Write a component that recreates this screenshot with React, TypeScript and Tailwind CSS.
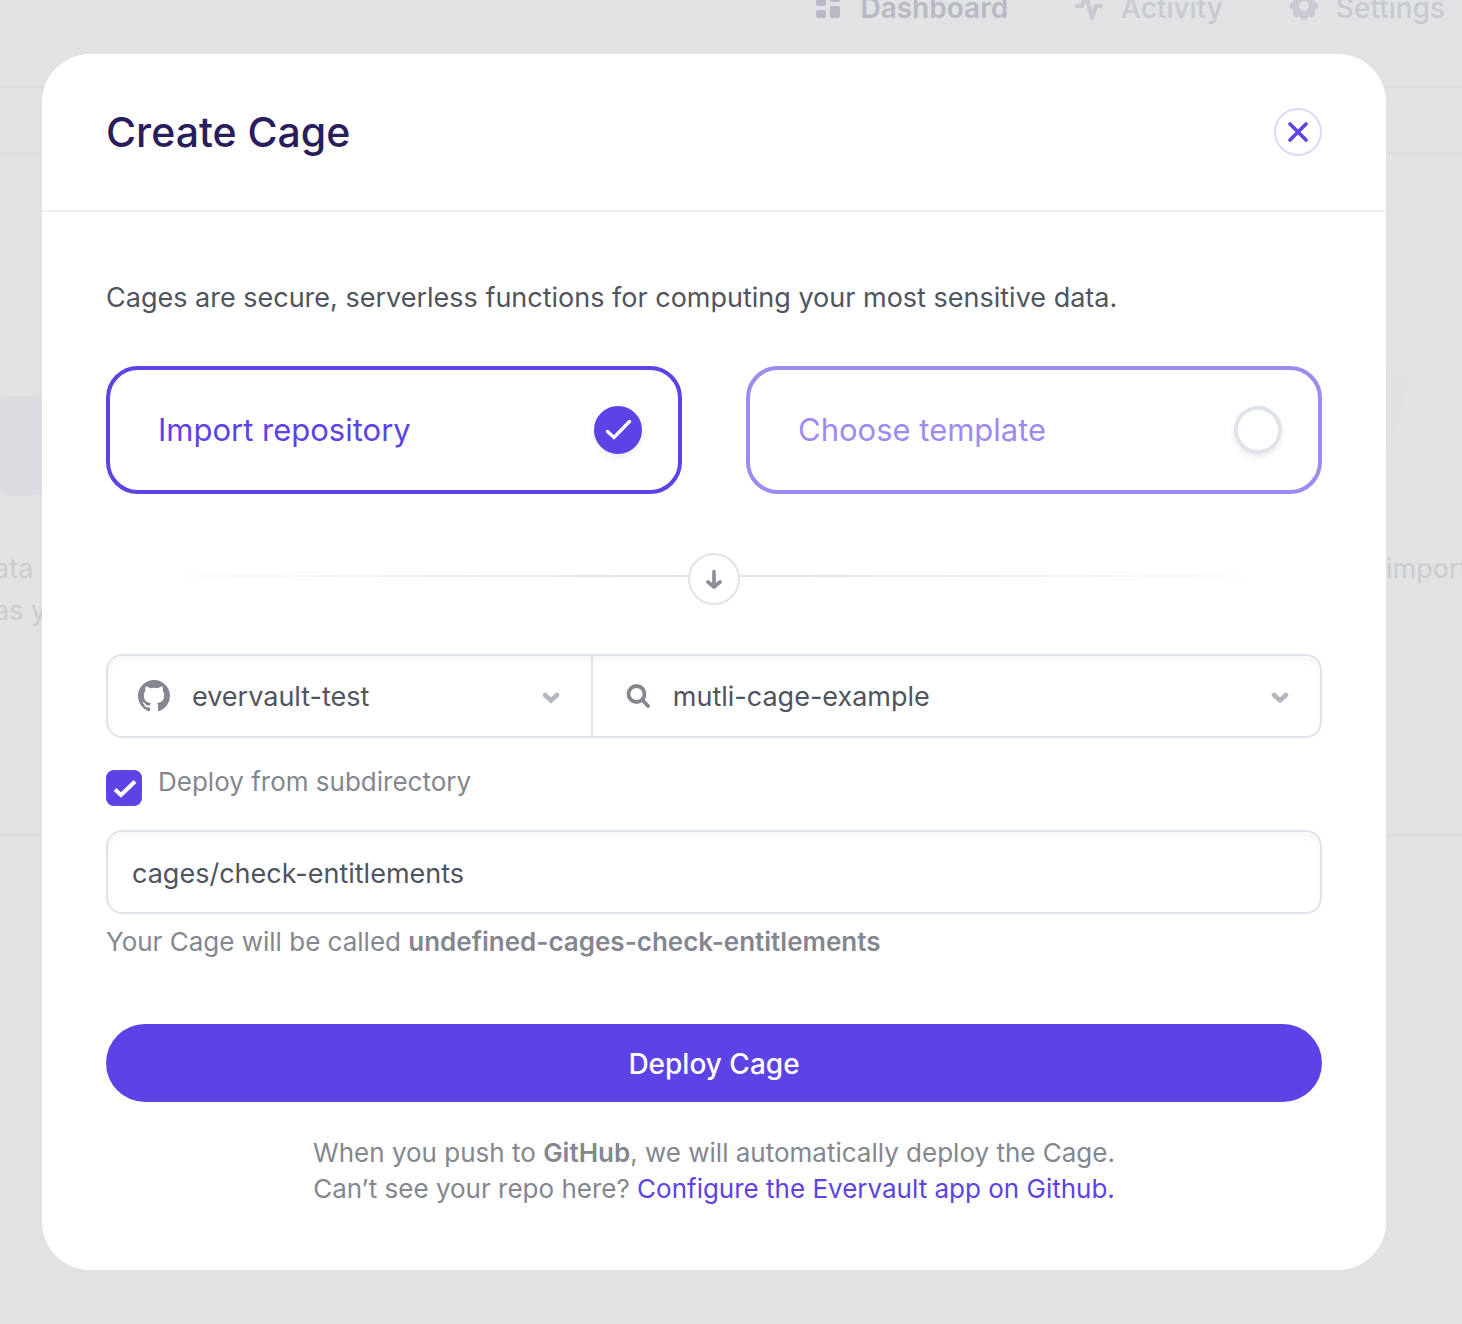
import { useState } from "react";
import type { ReactNode } from "react";

const body = '"Inter", "Liberation Sans", sans-serif';

function NavItem({ icon, label, strong }: { icon: ReactNode; label: string; strong?: boolean }) {
  return (
    <a href="#" className={strong ? "flex items-center gap-5 font-semibold text-[#b8b9c5]" : "flex items-center gap-[18px] font-medium text-[#c8c9d2]"}>
      {icon}
      {label}
    </a>
  );
}

function DashboardIcon() {
  return (
    <svg viewBox="0 0 24 32" className="h-8 w-6" fill="currentColor" aria-hidden="true">
      <rect x="0" y="0" width="10" height="14" rx="2" />
      <rect x="14" y="0" width="10" height="10" rx="2" />
      <rect x="0" y="18" width="10" height="8" rx="2" />
      <rect x="14" y="14" width="10" height="12" rx="2" />
    </svg>
  );
}

function ActivityIcon() {
  return (
    <svg viewBox="0 0 28 32" className="h-8 w-7" fill="none" stroke="currentColor" strokeWidth="4" strokeLinecap="round" strokeLinejoin="round" aria-hidden="true">
      <path d="M2 14h5l4-11 6 23 4-12h5" />
    </svg>
  );
}

function GearIcon() {
  return (
    <svg viewBox="0 0 28 32" className="h-8 w-7" aria-hidden="true">
      <g fill="currentColor">
        <circle cx="14" cy="14" r="11.5" />
        {[0, 45, 90, 135].map((a) => (
          <rect key={a} x="10.5" y="0" width="7" height="28" rx="3" transform={`rotate(${a} 14 14)`} />
        ))}
      </g>
      <circle cx="14" cy="14" r="5" fill="#e0e2e3" />
    </svg>
  );
}

function Backdrop() {
  return (
    <div className="min-h-screen overflow-hidden bg-[#e0e2e3]">
      <nav className="flex h-[88px] items-start justify-end border-b-2 border-[#dcdee0] pr-[17px] text-[28px] leading-4">
        <div className="flex h-4 items-center gap-[67px]">
          <NavItem icon={<DashboardIcon />} label="Dashboard" strong />
          <NavItem icon={<ActivityIcon />} label="Activity" />
          <NavItem icon={<GearIcon />} label="Settings" />
        </div>
      </nav>
      <div className="h-[66px] border-b-2 border-[#dadcde]" />
      <section className="flex h-[682px] justify-between border-b-2 border-[#dadcde] pt-[220px] text-[27px] leading-[42px] text-[#cbcccf]">
        <div className="flex flex-col gap-[50px]">
          <svg viewBox="0 0 80 124" className="h-[124px] w-20" aria-hidden="true">
            <path d="M0 23 80 19V120L12 122Q6 122 0 116Z" fill="#dcdde0" />
          </svg>
          <p className="-ml-1.5">
            ata
            <br />
            as y
          </p>
        </div>
        <div className="flex w-[76px] flex-col gap-[50px]">
          <svg viewBox="0 0 76 124" className="h-[124px] w-[76px]" aria-hidden="true">
            <path d="M0 0H25L0 88Z" fill="#dfe1e2" />
          </svg>
          <p>import</p>
        </div>
      </section>
    </div>
  );
}

function Choice({ label, selected, onSelect }: { label: string; selected: boolean; onSelect: () => void }) {
  return (
    <label
      className={
        selected
          ? "flex h-32 flex-1 cursor-pointer items-center justify-between rounded-[32px] border-4 border-[#5d43e6] pr-9 pl-12 text-[31px] text-[#5d43e6]"
          : "flex h-32 flex-1 cursor-pointer items-center justify-between rounded-[32px] border-4 border-[#9e8bf2] pr-9 pl-12 text-[31px] text-[#9e8bf2]"
      }
    >
      {label}
      <span className="relative size-12">
        <input
          type="radio"
          name="source"
          checked={selected}
          onChange={onSelect}
          className="block size-12 cursor-pointer appearance-none rounded-full border-4 border-[#dfe3ea] bg-white shadow-[0_3px_6px_rgba(0,0,0,0.08)] checked:border-[#5d43e6] checked:bg-[#5d43e6]"
        />
        {selected && (
          <svg viewBox="0 0 48 48" className="pointer-events-none absolute inset-0 size-12" fill="none" stroke="#fff" strokeWidth="3.4" strokeLinecap="round" aria-hidden="true">
            <path d="M13.5 25.5 20 31.5 35.5 15.5" />
          </svg>
        )}
      </span>
    </label>
  );
}

function Chevron() {
  return (
    <svg viewBox="0 0 18 12" className="pointer-events-none absolute top-9 right-[31px] h-3 w-[18px]" fill="none" stroke="#b1b6bd" strokeWidth="4.5" strokeLinecap="round" strokeLinejoin="miter" aria-hidden="true">
      <path d="M3 3 9 8.5 15 3" />
    </svg>
  );
}

export default function App() {
  const [source, setSource] = useState("import");
  const [sub, setSub] = useState(true);
  const [path, setPath] = useState("cages/check-entitlements");

  return (
    <div className="relative" style={{ fontFamily: body }}>
      <Backdrop />
      <div className="absolute inset-0 pt-[54px] pr-[76px] pl-[42px]">
        <div role="dialog" aria-labelledby="title" className="rounded-[48px] bg-white pb-[63px]">
          <header className="flex items-center justify-between border-b-2 border-[#eceef0] px-16 py-[54px]">
            <h1 id="title" className="text-[41px] leading-[48px] font-medium text-[#2a1d5c]">Create Cage</h1>
            <button type="button" aria-label="Close" className="flex size-12 items-center justify-center rounded-full border-2 border-[#ddd7fa]">
              <svg viewBox="0 0 20 20" className="size-5" stroke="#5d43e6" strokeWidth="3.6" strokeLinecap="round" aria-hidden="true">
                <path d="M2 2 18 18M18 2 2 18" />
              </svg>
            </button>
          </header>

          <form className="px-16 pt-16" onSubmit={(e) => e.preventDefault()}>
            <p className="text-[27px] leading-[44px] text-[#50545e]">Cages are secure, serverless functions for computing your most sensitive data.</p>

            <div className="mt-[46px] flex gap-16">
              <Choice label="Import repository" selected={source === "import"} onSelect={() => setSource("import")} />
              <Choice label="Choose template" selected={source === "template"} onSelect={() => setSource("template")} />
            </div>

            <div className="mt-[59px] flex items-center">
              <div className="mb-1.5 h-0.5 flex-1 bg-linear-to-r from-transparent from-5% to-[#dfe3ea]" />
              <div className="flex size-[52px] items-center justify-center rounded-full border-2 border-[#dfe3ea]">
                <svg viewBox="0 0 18 20" className="h-5 w-[18px]" fill="none" stroke="#8a8d99" strokeWidth="3.6" strokeLinecap="round" strokeLinejoin="round" aria-hidden="true">
                  <path d="M9 2.5V18M3 13 9 18 15 13" />
                </svg>
              </div>
              <div className="mb-1.5 h-0.5 flex-1 bg-linear-to-l from-transparent from-5% to-[#dfe3ea]" />
            </div>

            <div className="mt-[49px] flex h-21 rounded-2xl border-2 border-[#dfe3ea] text-[27px] text-[#50545e] shadow-[inset_0_4px_8px_rgba(0,0,0,0.04)]">
              <div className="relative flex w-2/5 items-center border-r-2 border-[#dfe3ea]">
                <svg viewBox="0 0 16 16" className="pointer-events-none absolute left-[30px] size-8" fill="#84878f" aria-hidden="true">
                  <path d="M8 0C3.58 0 0 3.58 0 8c0 3.54 2.29 6.53 5.47 7.59.4.07.55-.17.55-.38 0-.19-.01-.82-.01-1.49-2.01.37-2.53-.49-2.69-.94-.09-.23-.48-.94-.82-1.13-.28-.15-.68-.52-.01-.53.63-.01 1.08.58 1.23.82.72 1.21 1.87.87 2.33.66.07-.52.28-.87.51-1.07-1.78-.2-3.64-.89-3.64-3.95 0-.87.31-1.59.82-2.15-.08-.2-.36-1.02.08-2.12 0 0 .67-.21 2.2.82.64-.18 1.32-.27 2-.27s1.36.09 2 .27c1.53-1.04 2.2-.82 2.2-.82.44 1.1.16 1.92.08 2.12.51.56.82 1.27.82 2.15 0 3.07-1.87 3.75-3.65 3.95.29.25.54.73.54 1.48 0 1.07-.01 1.93-.01 2.2 0 .21.15.46.55.38A8.01 8.01 0 0 0 16 8c0-4.42-3.58-8-8-8Z" />
                </svg>
                <select aria-label="Account" className="size-full appearance-none bg-transparent pt-0.5 pr-16 pl-[84px]">
                  <option>evervault-test</option>
                </select>
                <Chevron />
              </div>
              <div className="relative flex flex-1 items-center">
                <svg viewBox="0 0 24 24" className="pointer-events-none absolute left-[33px] size-6" fill="none" stroke="#84878f" strokeWidth="3.8" strokeLinecap="round" aria-hidden="true">
                  <circle cx="10.5" cy="10" r="8" />
                  <path d="M16.5 16 22 22" />
                </svg>
                <select aria-label="Repository" className="size-full appearance-none bg-transparent pt-0.5 pr-16 pl-20">
                  <option>mutli-cage-example</option>
                </select>
                <Chevron />
              </div>
            </div>

            <label className="mt-6 flex h-11 cursor-pointer gap-4 text-[26px] leading-10 text-[#84878f]">
              <span className="relative size-9 self-end">
                <input type="checkbox" checked={sub} onChange={() => setSub(!sub)} className="block size-9 cursor-pointer appearance-none rounded-lg border-2 border-[#dfe3ea] checked:border-[#5d43e6] checked:bg-[#5d43e6]" />
                {sub && (
                  <svg viewBox="0 0 36 36" className="pointer-events-none absolute inset-0 size-9" fill="none" stroke="#fff" strokeWidth="4" aria-hidden="true">
                    <path d="M9 19.5 15 25 29 11.5" />
                  </svg>
                )}
              </span>
              Deploy from subdirectory
            </label>

            <input
              aria-label="Subdirectory"
              value={path}
              onChange={(e) => setPath(e.target.value)}
              className="mt-6 block h-21 w-full rounded-2xl border-2 border-[#dfe3ea] px-6 pt-0.5 text-[27px] text-[#50545e] shadow-[inset_0_4px_8px_rgba(0,0,0,0.04)]"
            />
            <p className="mt-2 text-[26px] leading-10 text-[#84878f]">
              Your Cage will be called <strong className="font-semibold">undefined-cages-check-entitlements</strong>
            </p>

            <button type="submit" className="mt-[62px] block h-[78px] w-full rounded-full bg-[#5d43e6] pt-0.5 text-[28px] font-medium text-white">
              Deploy Cage
            </button>

            <p className="mt-[33px] text-center text-[26px] leading-9 text-[#84878f]">
              When you push to <strong className="font-semibold">GitHub</strong>, we will automatically deploy the Cage.
              <br />
              Can’t see your repo here?{" "}
              <a href="#" className="text-[#5d43e6]">
                Configure the Evervault app on Github.
              </a>
            </p>
          </form>
        </div>
      </div>
    </div>
  );
}
